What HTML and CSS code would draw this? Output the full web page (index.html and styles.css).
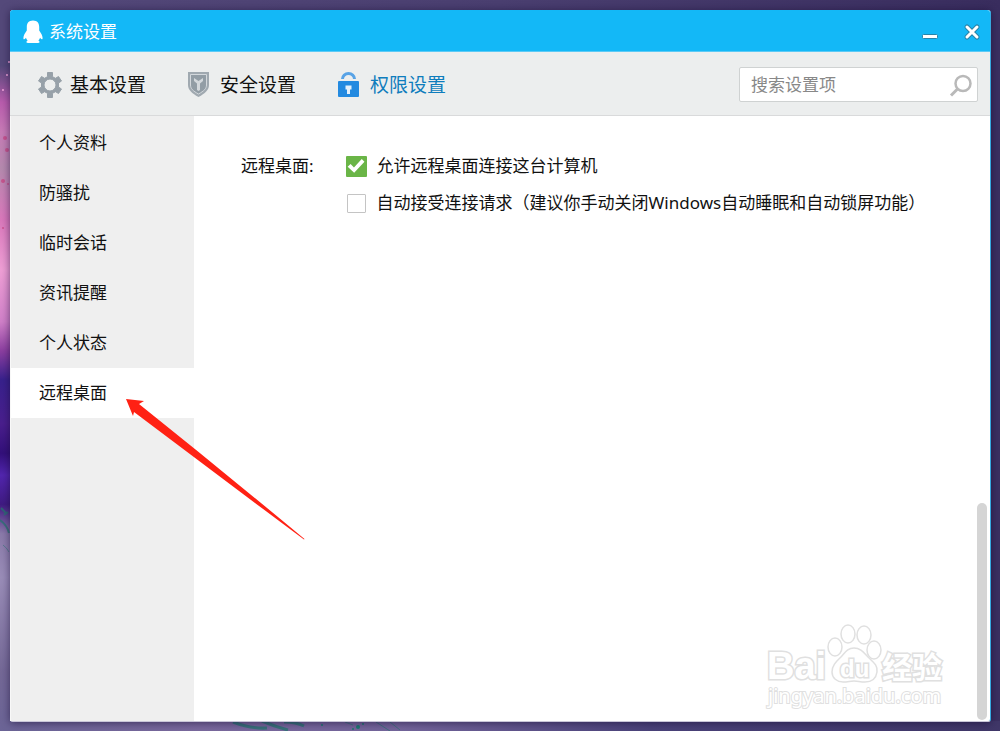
FILE: index.html
```html
<!DOCTYPE html>
<html lang="zh-CN">
<head>
<meta charset="utf-8">
<meta name="viewport" content="width=device-width, initial-scale=1">
<title>系统设置</title>
<link rel="stylesheet" href="styles.css">
</head>
<body class="desktop">
<svg class="wallpaper" aria-hidden="true" width="400" height="731" viewBox="0 0 400 731">
  <g fill="none" stroke="#24766f">
    <path d="M1 508l6 6M0 520q7 5 9 13M4 515l4-3" stroke-width="2" opacity=".7"/>
    <path d="M3 545q4 3 6 7" stroke-width="1" opacity=".5"/>
    <path d="M233 722q18 7 34 6M262 721q14 6 26 9M284 722q12 0 20 4" stroke-width="3" opacity=".75"/>
    <path d="M345 722l8 3M376 722l14 9M390 722l10 8" stroke-width="1" opacity=".6"/>
  </g>
  <g fill="#1c7a70"><circle cx="358" cy="727" r="2"/><circle cx="363" cy="724" r="1"/><circle cx="353" cy="729" r="1"/><circle cx="322" cy="725" r="1"/></g>
  <g fill="#c9427f" opacity=".7"><circle cx="5" cy="138" r="2"/><circle cx="7" cy="150" r="2"/><circle cx="3" cy="181" r="2"/><circle cx="8" cy="184" r="1"/><circle cx="3" cy="228" r="1"/></g>
  <g fill="#f3a4dc"><circle cx="9" cy="62" r="1"/><circle cx="7" cy="75" r="1"/><circle cx="3" cy="90" r="1"/></g>
</svg>
<div class="window">
  <header class="titlebar">
    <svg class="penguin" width="20" height="24" viewBox="0 0 20 24" aria-hidden="true"><path fill="#fff" d="M10 0.500C5.700 0.500 3.800 3.300 3.800 7v3.500C2 13 .4 15.500.4 18c0 1.200.3 1.500.8 1.300.7-.2 1.200-.8 1.700-1.500.4 1 .9 2 1.700 2.800-.8.4-1.200.8-1.200 1.400 0 .8.900 1 2.800 1h7.600c1.900 0 2.800-.2 2.800-1 0-.6-.4-1-1.200-1.400.8-.8 1.300-1.800 1.700-2.800.5.7 1 1.300 1.700 1.500.5.200.8-.1.8-1.300 0-2.500-1.600-5-3.400-7.500V7c0-3.700-1.900-6.500-6.200-6.500z"/></svg>
    <h1 class="title">系统设置</h1>
    <button class="win-btn" type="button" aria-label="最小化"><svg width="18" height="18" viewBox="0 0 18 18"><rect x="1.500" y="11.500" width="15" height="4" rx="1" fill="#fff" stroke="#2783a8"/></svg></button>
    <button class="win-btn" type="button" aria-label="关闭"><svg width="18" height="18" viewBox="0 0 18 18" fill="none" stroke-linecap="round"><path d="M4 4l10 10M14 4L4 14" stroke="#2783a8" stroke-width="5"/><path d="M4 4l10 10M14 4L4 14" stroke="#fff" stroke-width="3"/></svg></button>
  </header>
  <div class="toolbar">
    <nav class="tabs" aria-label="设置分类">
      <a class="tab" href="#basic"><svg width="24" height="26" viewBox="0 0 24 26" aria-hidden="true"><path fill="#97a1a9" stroke="#97a1a9" stroke-linejoin="round" fill-rule="evenodd" d="M9.500.5h5v4.200l3 1.600 3-1.800 3 4.500-3 2v4l3 2-3 4.500-3-1.800-3 1.600v4.200h-5v-4.200l-3-1.600-3 1.800-3-4.500 3-2v-4l-3-2 3-4.500 3 1.800 3-1.600zM12 7a6 6 0 1 0 0 12 6 6 0 0 0 0-12z"/></svg>基本设置</a>
      <a class="tab" href="#security"><svg width="24" height="26" viewBox="0 0 24 26" aria-hidden="true"><path fill="#a0a9b0" d="M0 0h21v13c0 5-4 8.500-10.500 12C4 21.500 0 18 0 13z"/><path d="M2.500 2.500h16V13c0 3.500-2.500 6-8 9-5.500-3-8-5.500-8-9z" fill="#929da5" stroke="#d3d8dc"/><path d="M6 6l4.500 3L15 6v3l-3 2.500V18l-1.500 1L9 18v-6.500L6 9z" fill="#d3d8dc"/></svg>安全设置</a>
      <a class="tab tab-active" href="#permission" aria-current="page"><svg width="24" height="26" viewBox="0 0 24 26" aria-hidden="true"><path d="M4.500 7a6 5.500 0 0 1 12 0" fill="none" stroke="#58a3e6" stroke-width="3"/><rect x="0" y="9" width="21" height="16" rx="1" fill="#238ae0"/><path d="M7.500 13.500h6v4H12V22H9v-4.500H7.500z" fill="#e5f1fb"/></svg>权限设置</a>
    </nav>
    <form class="search" role="search">
      <input class="search-input" type="text" placeholder="搜索设置项" aria-label="搜索设置项">
      <button class="search-btn" type="button" aria-label="搜索"><svg width="24" height="24" viewBox="0 0 24 24" fill="none" stroke="#b9b9b9"><circle cx="14" cy="10.500" r="7.500" stroke-width="2.500"/><path d="M8.500 16L2 22.500" stroke-width="3"/></svg></button>
    </form>
  </div>
  <div class="body">
    <nav class="sidebar" aria-label="权限设置">
      <a class="side-item" href="#profile">个人资料</a>
      <a class="side-item" href="#disturb">防骚扰</a>
      <a class="side-item" href="#session">临时会话</a>
      <a class="side-item" href="#news">资讯提醒</a>
      <a class="side-item" href="#status">个人状态</a>
      <a class="side-item side-active" href="#remote" aria-current="page">远程桌面</a>
    </nav>
    <main class="content">
      <div class="setting" role="group" aria-labelledby="remote-label">
        <span class="setting-label" id="remote-label">远程桌面:</span>
        <div class="options">
          <label class="option"><input class="check" type="checkbox" checked>允许远程桌面连接这台计算机</label>
          <label class="option"><input class="check" type="checkbox">自动接受连接请求（建议你手动关闭Windows自动睡眠和自动锁屏功能）</label>
        </div>
      </div>
    </main>
    <div class="scroll-track"><div class="scroll-thumb"></div></div>
    <svg class="arrow" width="180" height="142" viewBox="0 0 180 142" aria-hidden="true"><path fill="#ff2114" d="M1 0l18 2-5 3q85 68 165.500 135l-.5.600Q94 77 9 13l-1 4z"/></svg>
    <svg class="watermark" width="184" height="96" viewBox="0 0 184 96" role="img" aria-label="Baidu经验">
      <g fill="#fff" stroke="#e0e0e0" stroke-width="1.500">
        <ellipse cx="70" cy="30" rx="7" ry="9"/><ellipse cx="83" cy="17" rx="7" ry="9"/><ellipse cx="99" cy="18" rx="7" ry="9"/><ellipse cx="109" cy="33" rx="7" ry="9"/>
        <path d="M89 31c7 0 10 5 14 9 5 5 10 8 9 15-1 7-6 10-12 10-5 0-7-1-11-1s-6 1-11 1c-6 0-11-4-11-10 0-7 5-11 9-15s6-9 13-9z"/>
        <text class="mark-bold" x="2" y="62" font-size="38" stroke-width="3">Bai</text>
        <text class="mark-du" x="75" y="60" font-size="24" stroke-width="3">du</text>
        <text class="mark-bold" x="117" y="61" font-size="30" stroke-width="3">经验</text>
        <text class="mark-url" x="3" y="86" font-size="20" stroke-width="2">jingyan.baidu.com</text>
      </g>
    </svg>
  </div>
</div>
</body>
</html>
```

FILE: styles.css
```css
* { box-sizing: border-box; }

.desktop {
  display: flex;
  min-height: 100vh;
  margin: 0;
  padding: 10px 9px 9px 10px;
  font-family: "Noto Sans", "Noto Sans CJK SC", sans-serif;
  font-size: 17px;
  line-height: 24px;
  color: #111;
  background:
    linear-gradient(#54497a 0, #54497a 9%, #b95cad 14%, #c77bb6 18%, #b58aae 23%, #d978bb 30%, #ee9fd5 37%, #d080c8 44%, #8c3fa0 48%, #38218c 52%, #4a1f8d 58%, #33107a 62%, #5226ae 65%, #401b82 69%, #8a7aa9 73%, #9a8db8 79%, #746896 92%, #6b6496 100%) left top / 10px 100% no-repeat,
    linear-gradient(90deg, #54497a, #4a3f70 50%, #392d5e) left top / 100% 10px no-repeat,
    linear-gradient(90deg, #6b6496, #7b6a9e 20%, #74659b 40%, #4b437a 65%, #403768) left bottom / 100% 10px no-repeat,
    #3b3061;
}

.wallpaper { position: absolute; left: 0; top: 0; }

.window {
  position: relative;
  flex: 1;
  display: flex;
  flex-direction: column;
  min-width: 0;
  border-right: 1px solid #35a9df;
  border-bottom: 1px solid #c9c6d8;
  border-radius: 3px;
  background: #fff;
  box-shadow: 0 1px 8px rgba(20, 10, 50, .6);
}

.titlebar {
  display: flex;
  align-items: center;
  gap: 6px;
  height: 42px;
  padding: 2px 9px 0 13px;
  border-bottom: 1px solid #5ccaf5;
  border-radius: 3px 3px 0 0;
  background: #13b8f7;
}

.title { flex: 1; margin: 0; font-size: 17px; font-weight: 400; color: #fff; }

.win-btn, .search-btn {
  display: flex;
  padding: 0;
  border: 0;
  background: none;
}

.win-btn + .win-btn { margin-left: 18px; }

.toolbar {
  display: flex;
  align-items: center;
  justify-content: space-between;
  height: 64px;
  padding: 2px 12px 0 28px;
  border-bottom: 1px solid #d9dadb;
  background: #eceeee;
}

.tabs { display: flex; gap: 42px; }

.tab {
  display: flex;
  align-items: center;
  gap: 8px;
  font-size: 19px;
  color: #111;
  text-decoration: none;
}

.tab-active { color: #0f7dbd; }

.search {
  display: flex;
  align-items: center;
  width: 239px;
  height: 35px;
  padding: 0 4px 0 11px;
  border: 1px solid #cfd2d2;
  border-radius: 2px;
  background: #fff;
}

.search-input {
  flex: 1;
  min-width: 0;
  padding: 0;
  border: 0;
  outline: 0;
  font: inherit;
  background: none;
}

.search-input::placeholder { color: #888; opacity: 1; }

.body { position: relative; flex: 1; display: flex; }

.sidebar {
  flex: 0 0 184px;
  padding-top: 2px;
  border-left: 1px solid #f8f8f8;
  background: #efefef;
}

.side-item {
  display: block;
  padding: 13px 0 13px 28px;
  color: #111;
  text-decoration: none;
}

.side-active { background: #fff; }

.content { flex: 1; min-width: 0; padding: 37px 0 0 47px; }

.setting { display: flex; gap: 32px; }

.setting-label { line-height: 26px; white-space: nowrap; }

.options { display: flex; flex-direction: column; gap: 11px; }

.option { display: flex; align-items: center; gap: 10px; line-height: 26px; }

.check {
  appearance: none;
  flex: none;
  width: 19px;
  height: 19px;
  margin: 0 1px;
  border: 1px solid #c4c4c4;
  border-radius: 1px;
  background: #fff;
}

.check:checked {
  width: 21px;
  height: 21px;
  margin: 0;
  border: 0;
  background: #6ab547;
}

.check:checked::before {
  content: "";
  display: block;
  height: 100%;
  background: #fff;
  clip-path: polygon(10% 53%, 24% 41%, 40% 57%, 77% 17%, 90% 30%, 41% 82%);
}

.scroll-track {
  display: flex;
  align-items: flex-end;
  padding: 0 3px 1px 0;
}

.scroll-thumb { width: 10px; height: 36%; border-radius: 5px; background: #d5d5d5; }

.arrow { position: absolute; left: 115px; top: 283px; pointer-events: none; }

.watermark { position: absolute; right: 41px; bottom: 8px; pointer-events: none; }

.watermark text { paint-order: stroke; }

.mark-bold { font-family: "Liberation Sans", "Noto Sans CJK SC", sans-serif; font-weight: 700; }

.mark-du { font-family: "Liberation Sans", sans-serif; font-weight: 700; }

.mark-url { font-family: "Noto Sans", sans-serif; }
```
